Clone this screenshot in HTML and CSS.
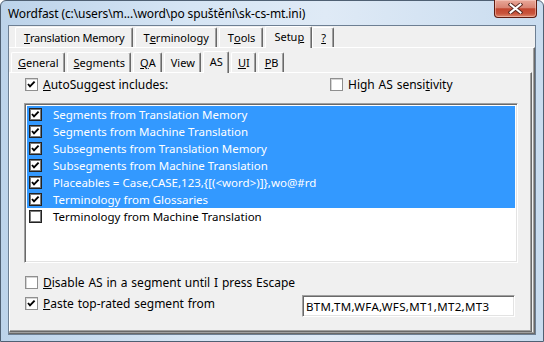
FILE: index.html
```html
<!DOCTYPE html>
<html lang="en">
<head>
    <meta charset="UTF-8">
    <title>Wordfast</title>
    <link rel="stylesheet" href="styles.css">
</head>
<body>
    <div class="window">
        <div class="titlebar">
            <span class="title">Wordfast (c:\users\m...\word\po spuštění\sk-cs-mt.ini)</span>
            <div class="close">
                <svg width="15" height="11" viewBox="0 0 15 11">
                    <path d="M2.5 1.5 L12.5 9.5 M12.5 1.5 L2.5 9.5" stroke="#5a2a22" stroke-width="4" stroke-linecap="square" fill="none"/>
                    <path d="M2.5 1.5 L12.5 9.5 M12.5 1.5 L2.5 9.5" stroke="#fff" stroke-width="2" stroke-linecap="square" fill="none"/>
                </svg>
            </div>
        </div>

        <div class="client">
            <div class="tabs tabs-main">
                <div class="tab tab-tm"><u>T</u>ranslation Memory</div>
                <div class="tab">T<u>e</u>rminology</div>
                <div class="tab">T<u>o</u>ols</div>
                <div class="tab active">Setu<u>p</u></div>
                <div class="tab"><u>?</u></div>
            </div>
            <div class="page page-main">
                <div class="tabs tabs-sub">
                    <div class="tab"><u>G</u>eneral</div>
                    <div class="tab"><u>S</u>egments</div>
                    <div class="tab"><u>Q</u>A</div>
                    <div class="tab">View</div>
                    <div class="tab active">AS</div>
                    <div class="tab"><u>U</u>I</div>
                    <div class="tab"><u>P</u>B</div>
                </div>
                <div class="page page-sub">
                    <div class="top-row">
                        <label class="option segoe"><span class="box checked"></span><span><u>A</u>utoSuggest includes:</span></label>
                        <label class="option"><span class="box"></span><span>High AS sensi<u>t</u>ivity</span></label>
                    </div>

                    <div class="listbox">
                        <div class="item selected"><span class="lbox checked"></span>Segments from Translation Memory</div>
                        <div class="item selected"><span class="lbox checked"></span>Segments from Machine Translation</div>
                        <div class="item selected"><span class="lbox checked"></span>Subsegments from Translation Memory</div>
                        <div class="item selected"><span class="lbox checked"></span>Subsegments from Machine Translation</div>
                        <div class="item selected"><span class="lbox checked"></span>Placeables = Case,CASE,123,{[(&lt;word&gt;)]},wo@#rd</div>
                        <div class="item selected"><span class="lbox checked"></span>Terminology from Glossaries</div>
                        <div class="item"><span class="lbox"></span>Terminology from Machine Translation</div>
                    </div>

                    <label class="option option-disable"><span class="box"></span><span><u>D</u>isable AS in a segment until I press Escape</span></label>
                    <div class="paste-row">
                        <label class="option"><span class="box checked"></span><span><u>P</u>aste top-rated segment from</span></label>
                        <div class="textbox">BTM,TM,WFA,WFS,MT1,MT2,MT3</div>
                    </div>
                </div>
            </div>
        </div>
    </div>
</body>
</html>
```

FILE: styles.css
```css
* {
    margin: 0;
    padding: 0;
    box-sizing: border-box;
}

body {
    width: 544px;
    height: 342px;
    overflow: hidden;
    background: #ffffff;
    font-family: "Noto Sans", sans-serif;
    font-size: 11px;
    color: #000;
}

u {
    text-decoration: underline;
    text-underline-offset: 1px;
}

/* window frame */
.window {
    width: 544px;
    height: 342px;
    display: flex;
    flex-direction: column;
    padding: 0 7px 6px;
    border: 1px solid #4f6073;
    border-radius: 6px 6px 0 0;
    background: linear-gradient(to right, #bcd3ea, #d6e5f4 35%, #dfeaf6 60%, #c9dcef);
}

.titlebar {
    height: 24px;
    display: flex;
    align-items: center;
}

.title {
    font-size: 12px;
    color: #000;
    letter-spacing: -0.1px;
}

.close {
    align-self: flex-start;
    margin: -1px -1px 0 auto;
    width: 43px;
    height: 18px;
    display: flex;
    align-items: center;
    justify-content: center;
    border: 1px solid #5e1b10;
    border-top: none;
    border-radius: 0 0 4px 4px;
    background: linear-gradient(#e9a899, #d98473 45%, #c2462f 52%, #c9553d 80%, #dc8a6f);
    box-shadow: inset 0 0 0 1px rgba(255, 220, 210, 0.45);
}

.client {
    flex: 1;
    display: flex;
    flex-direction: column;
    background: #f0f0f0;
    border: 1px solid #6d7f93;
}

/* tabs */
.tabs {
    display: flex;
    align-items: flex-end;
    gap: 2px;
}

.tabs-main {
    height: 21px;
    padding-left: 6px;
}

.tabs-sub {
    height: 24px;
    padding-left: 2px;
}

.tab {
    height: 20px;
    display: flex;
    align-items: center;
    padding: 0 5px 1px 6px;
    border-top: 1px solid #ffffff;
    border-left: 1px solid #ffffff;
    border-right: 1px solid #696969;
    box-shadow: inset -1px 0 #a0a0a0;
    border-radius: 2px 2px 0 0;
    white-space: nowrap;
}

.tabs-main .tab {
    padding: 0 7px 1px 8px;
}

.tabs-main .tab-tm {
    letter-spacing: -0.2px;
}

.tabs-main .tab.active {
    padding: 0 7px 3px 8px;
    margin-right: -2px;
}

.tab.active {
    height: 22px;
    margin-bottom: -1px;
    padding-bottom: 3px;
    background: #f0f0f0;
    position: relative;
}

.page {
    display: flex;
    flex-direction: column;
}

.page-main {
    flex: 1;
    border-top: 1px solid #ffffff;
    border-right: 1px solid #696969;
    border-bottom: 1px solid #696969;
    box-shadow: inset -1px -1px #a0a0a0;
    padding: 0 2px 1px 0;
}

.page-sub {
    flex: 1;
    border-top: 1px solid #ffffff;
    border-left: 1px solid #ffffff;
    border-right: 1px solid #696969;
    border-bottom: 1px solid #696969;
    box-shadow: inset -1px -1px #a0a0a0;
    padding: 4px 0 0 14px;
    font-size: 12px;
    word-spacing: 0.7px;
}

/* check boxes */
.option {
    display: flex;
    align-items: center;
    gap: 5px;
    height: 15px;
    white-space: nowrap;
}

.segoe {
    word-spacing: 0;
}

.box {
    width: 13px;
    height: 13px;
    flex: none;
    background: #ffffff;
    border: 1px solid #8f8f8f;
    box-shadow: inset 1px 1px #d4d4d4;
}

.lbox {
    width: 13px;
    height: 13px;
    flex: none;
    background: #ffffff;
    border: 1px solid #222;
    box-shadow: inset 0 0 0 1px #7a7a7a;
    margin-right: 11px;
}

.checked {
    background: #ffffff url("data:image/svg+xml,%3Csvg xmlns='http://www.w3.org/2000/svg' width='11' height='11'%3E%3Cpath d='M2 5 L4 7.3 L8.6 2.6' stroke='%23000' stroke-width='1.9' fill='none'/%3E%3C/svg%3E") center / 11px 11px no-repeat;
}

.top-row {
    display: grid;
    grid-template-columns: 305px auto;
    margin-left: 1px;
}

/* list */
.listbox {
    width: 494px;
    height: 160px;
    margin-top: 11px;
    background: #ffffff;
    border-top: 1px solid #a0a0a0;
    border-left: 1px solid #a0a0a0;
    border-right: 1px solid #ffffff;
    border-bottom: 1px solid #ffffff;
    box-shadow: inset 1px 1px #696969, inset -1px -1px #e3e3e3;
    padding: 2px 2px 0 2px;
    font-size: 11.5px;
    word-spacing: 0;
}

.item {
    height: 17px;
    display: flex;
    align-items: center;
    padding-left: 2px;
    white-space: nowrap;
    color: #000;
}

.item.selected {
    background: #3399ff;
    color: #ffffff;
}

.option-disable {
    margin: 12px 0 0 1px;
}

.paste-row {
    display: flex;
    align-items: flex-start;
    margin: 5px 0 0 1px;
}

.paste-row .option {
    width: 277px;
    margin-top: 1px;
}

.textbox {
    width: 213px;
    height: 22px;
    display: flex;
    align-items: center;
    padding-left: 3px;
    background: #ffffff;
    border-top: 1px solid #a0a0a0;
    border-left: 1px solid #a0a0a0;
    border-right: 1px solid #ffffff;
    border-bottom: 1px solid #ffffff;
    box-shadow: inset 1px 1px #696969, inset -1px -1px #e3e3e3;
    font-size: 11.5px;
    letter-spacing: 0.35px;
    word-spacing: 0;
}
```
